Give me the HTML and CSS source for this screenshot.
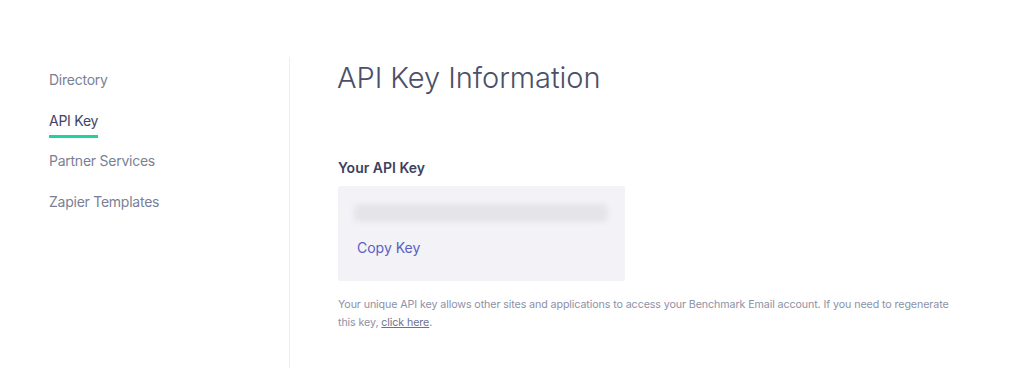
FILE: index.html
```html
<!DOCTYPE html>
<html>
<head>
<meta charset="utf-8">
<link rel="stylesheet" href="styles.css">
</head>
<body>
<div class="page">
  <nav class="sidebar">
    <a class="nav-item">Directory</a>
    <a class="nav-item active">API Key</a>
    <a class="nav-item">Partner Services</a>
    <a class="nav-item">Zapier Templates</a>
  </nav>
  <main class="main">
    <h1 class="title">API Key Information</h1>
    <h2 class="label">Your API Key</h2>
    <div class="key-box">
      <div class="key-blur"></div>
      <a class="copy">Copy Key</a>
    </div>
    <p class="note">Your unique API key allows other sites and applications to access your Benchmark Email account. If you need to regenerate this key, <a class="link">click here</a>.</p>
  </main>
</div>
</body>
</html>
```
FILE: styles.css
```css
html, body { margin: 0; padding: 0; background: #fff; }
body { font-family: Inter, "Noto Sans", sans-serif; }
.page { display: flex; padding-top: 57px; min-height: 311px; }
.sidebar {
  width: 240px;
  padding-left: 49px;
  border-right: 1px solid #efeff1;
  display: flex;
  flex-direction: column;
  align-items: flex-start;
  padding-top: 14px;
}
.nav-item {
  font-size: 14px;
  color: #7b7f95;
  line-height: 17px;
  margin-bottom: 23.5px;
  letter-spacing: -0.25px;
}
.nav-item.active {
  color: #3f4462;
  border-bottom: 3px solid #1dd3a0;
  padding-bottom: 6px;
  margin-bottom: 14.5px;
}
.main { padding-left: 48px; flex: 1; }
.title {
  margin: 0 0 0 -1px;
  font-weight: 300;
  font-size: 29px;
  line-height: 40px;
  color: #4a5069;
  padding-top: 1px;
  letter-spacing: -0.05px;
}
.label {
  margin: 60px 0 0 0;
  font-size: 14px;
  font-weight: 600;
  color: #3d4160;
  line-height: 20px;
}
.key-box {
  margin-top: 8px;
  width: 287px;
  height: 95px;
  background: #f3f2f7;
  border-radius: 2px;
  box-sizing: border-box;
  padding: 18px 16px 0 16px;
}
.key-blur {
  width: 254px;
  height: 18px;
  background: #e5e4e9;
  border-radius: 6px;
  filter: blur(2.5px);
}
.copy {
  display: block;
  margin: 16px 0 0 3px;
  font-size: 14px;
  color: #5960c2;
  line-height: 20px;
}
.note {
  margin: 15px 0 0 0;
  font-size: 10.7px;
  line-height: 18px;
  color: #8d91a6;
  max-width: 618px;
  letter-spacing: -0.1px;
}
.link { color: #6e7290; text-decoration: underline; }
```
